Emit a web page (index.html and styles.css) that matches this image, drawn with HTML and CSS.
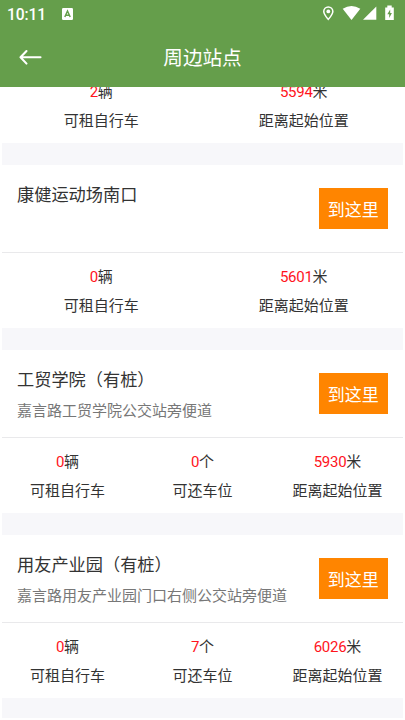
FILE: index.html
```
<!DOCTYPE html>
<html lang="zh-CN">
<head>
<meta charset="utf-8">
<title>周边站点</title>
<link rel="stylesheet" href="styles.css">
</head>
<body>
<div class="screen">
  <header class="top">
    <div class="status">
      <span class="clock">10:11</span>
      <svg class="keyboard" width="11" height="12" viewBox="0 0 11 12"><rect width="11" height="12" rx="1.2" fill="#fff"/><path d="M2.8 9 5.5 3 8.2 9M3.8 7.2H7.2" fill="none" stroke="#659e4b" stroke-width="1.5"/></svg>
      <svg class="tray" width="74" height="16" viewBox="0 0 74 16" fill="#fff">
        <path fill-rule="evenodd" d="M6.3 1.2A5.3 5.3 0 0 0 1 6.5C1 9.8 6.3 15.5 6.3 15.5S11.6 9.8 11.6 6.5A5.3 5.3 0 0 0 6.3 1.2ZM6.3 2.7A3.8 3.8 0 0 1 10.1 6.5C10.1 8.3 8 11.4 6.3 13.3 4.6 11.4 2.5 8.3 2.5 6.5A3.8 3.8 0 0 1 6.3 2.7Z"/>
        <circle cx="6.3" cy="6.4" r="1.9"/>
        <path d="M20.7 3.8Q29.5-1.6 38.3 3.8L29.5 15Z"/>
        <path d="M54.3 1.6V14.8H41Z"/>
        <path d="M63.2 2.5H65.3V.5H69.7V2.5H71.8V15H63.2Z"/>
        <path d="M68.2 4.5 65.3 9.2H67.2V13L69.9 8H68.2Z" fill="#659e4b"/>
      </svg>
    </div>
    <div class="bar">
      <svg class="back" width="24" height="18" viewBox="0 0 24 18" fill="none" stroke="#fff" stroke-width="2.1" stroke-linecap="round" stroke-linejoin="round"><path d="M21.5 9.3H1.5M7.5 3 1.5 9.3 7.5 15.6"/></svg>
      <h1>周边站点</h1>
    </div>
  </header>
  <main class="list">
    <section class="station clipped">
      <div class="stats">
        <div class="stat"><p><b>2</b>辆</p><p>可租自行车</p></div>
        <div class="stat"><p><b>5594</b>米</p><p>距离起始位置</p></div>
      </div>
    </section>
    <section class="station">
      <div class="info"><div class="place"><h2>康健运动场南口</h2></div><button>到这里</button></div>
      <div class="stats">
        <div class="stat"><p><b>0</b>辆</p><p>可租自行车</p></div>
        <div class="stat"><p><b>5601</b>米</p><p>距离起始位置</p></div>
      </div>
    </section>
    <section class="station">
      <div class="info"><div class="place"><h2>工贸学院（有桩）</h2><p>嘉言路工贸学院公交站旁便道</p></div><button>到这里</button></div>
      <div class="stats">
        <div class="stat"><p><b>0</b>辆</p><p>可租自行车</p></div>
        <div class="stat"><p><b>0</b>个</p><p>可还车位</p></div>
        <div class="stat"><p><b>5930</b>米</p><p>距离起始位置</p></div>
      </div>
    </section>
    <section class="station last">
      <div class="info"><div class="place"><h2>用友产业园（有桩）</h2><p>嘉言路用友产业园门口右侧公交站旁便道</p></div><button>到这里</button></div>
      <div class="stats">
        <div class="stat"><p><b>0</b>辆</p><p>可租自行车</p></div>
        <div class="stat"><p><b>7</b>个</p><p>可还车位</p></div>
        <div class="stat"><p><b>6026</b>米</p><p>距离起始位置</p></div>
      </div>
    </section>
  </main>
</div>
</body>
</html>
```
FILE: styles.css
```
* { box-sizing: border-box; margin: 0; padding: 0; }
body { background: #fff; color: #333; font-family: Roboto, "Noto Sans CJK SC", sans-serif; }
.screen { width: 405px; height: 720px; overflow: hidden; display: flex; flex-direction: column; }
.top { flex: none; height: 87px; background: #659e4b; color: #fff; }
.status { height: 28px; display: flex; align-items: center; padding: 0 9px 0 7px; }
.clock { width: 54.5px; font-size: 15.6px; line-height: 28px; padding-top: 1px; font-weight: 500; letter-spacing: -.1px; }
.keyboard { margin-top: -1px; }
.tray { margin-left: auto; margin-top: -2px; }
.bar { height: 58px; display: grid; grid-template-columns: 60px 1fr 60px; align-items: center; }
.back { margin-left: 19px; }
h1 { font-size: 19.6px; line-height: 28px; padding-top: 3px; font-weight: 400; text-align: center; }
.list { flex: 1; min-height: 0; overflow: hidden; }
.station { height: 185px; border-bottom: 22px solid #f7f7fa; margin: 0 2px; display: flex; flex-direction: column; }
.clipped { height: 78px; }
.last { height: 183px; border-bottom-width: 20px; }
.info { height: 88px; border-bottom: 1px solid #e9e9eb; padding: 0 15px; display: flex; justify-content: space-between; }
.place { padding-top: 17px; }
h2 { font-size: 17.2px; line-height: 26px; font-weight: 400; white-space: nowrap; }
.place p { font-size: 15px; line-height: 22px; margin-top: 7px; color: #777; white-space: nowrap; }
button { flex: none; width: 69.5px; height: 41px; margin-top: 23px; border: 0; background: #ff8500; color: #fff; font: 400 17px/41px Roboto, "Noto Sans CJK SC", sans-serif; padding-top: 2px; }
.stats { display: flex; flex: 1; padding-top: 10px; margin: 0 -2px; }
.clipped .stats { padding-top: 0; margin-top: -9px; }
.stat { flex: 1; text-align: center; font-size: 15px; line-height: 29px; white-space: nowrap; }
.stat b { font-weight: 400; color: #ff141d; letter-spacing: -.25px; }
```
